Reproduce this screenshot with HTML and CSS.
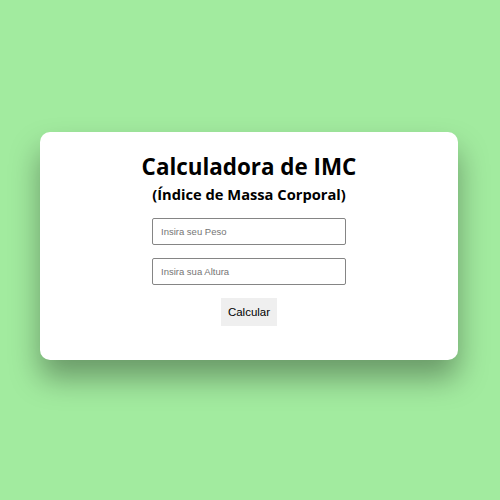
FILE: index.html
```html
<!DOCTYPE html>
<html lang="pt">
<head>
<meta charset="utf-8">
<title>Calculadora de IMC</title>
<link rel="stylesheet" href="styles.css">
</head>
<body>
<main class="page">
  <section class="card">
    <h1 class="title">Calculadora de IMC</h1>
    <h2 class="subtitle">(Índice de Massa Corporal)</h2>
    <form class="form">
      <input class="field" type="text" placeholder="Insira seu Peso">
      <input class="field" type="text" placeholder="Insira sua Altura">
      <button class="btn" type="button">Calcular</button>
    </form>
  </section>
</main>
</body>
</html>
```
FILE: styles.css
```css
html, body {
  margin: 0;
  padding: 0;
}
body {
  background: #a2eb9f;
  font-family: "Open Sans", "Liberation Sans", sans-serif;
}
.page {
  height: 500px;
  display: flex;
  align-items: flex-start;
  justify-content: center;
  padding-top: 132px;
  box-sizing: border-box;
}
.card {
  width: 418px;
  height: 228px;
  box-sizing: border-box;
  background: #fff;
  border-radius: 10px;
  box-shadow: 0 18px 30px rgba(0, 0, 0, 0.35);
  display: flex;
  flex-direction: column;
  align-items: center;
  padding-top: 21px;
  margin-left: -2px;
}
.title {
  margin: 0;
  font-size: 22.4px;
  font-weight: 700;
  line-height: 28px;
  color: #000;
}
.subtitle {
  margin: 2px 0 0;
  font-size: 14.7px;
  font-weight: 700;
  line-height: 23px;
  color: #000;
}
.form {
  display: flex;
  flex-direction: column;
  align-items: center;
  margin-top: 12px;
}
.field {
  width: 194px;
  height: 27px;
  box-sizing: border-box;
  border: 1px solid #858585;
  border-radius: 2px;
  padding: 0 8px;
  font-family: "Liberation Sans", Arial, sans-serif;
  font-size: 9.5px;
  margin-bottom: 13px;
}
.field::placeholder {
  color: #757575;
}
.btn {
  margin-top: 0;
  width: 56px;
  height: 28px;
  border: none;
  background: #efefef;
  font-family: "Liberation Sans", Arial, sans-serif;
  font-size: 11.5px;
  color: #000;
  padding: 0;
}
```
